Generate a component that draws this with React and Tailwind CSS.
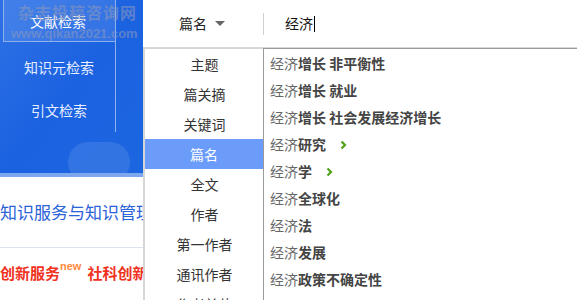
import React from "react";

const menuItems = ["主题", "篇关摘", "关键词", "篇名", "全文", "作者", "第一作者", "通讯作者", "作者单位"];

const suggestions = [
  { rest: "增长 非平衡性" },
  { rest: "增长 就业" },
  { rest: "增长 社会发展经济增长" },
  { rest: "研究", arrow: true },
  { rest: "学", arrow: true },
  { rest: "全球化" },
  { rest: "法" },
  { rest: "发展" },
  { rest: "政策不确定性" },
];

const Arrow = () => (
  <svg width="7" height="10" viewBox="0 0 7 10" className="ml-[14px]">
    <path d="M1.5 1.5 L5 5 L1.5 8.5" stroke="#52a21a" strokeWidth="2.2" fill="none" />
  </svg>
);

export default function App() {
  return (
    <div
      className="relative w-[577px] h-[300px] overflow-hidden bg-white flex"
      style={{ fontFamily: '"Noto Sans CJK SC", "Liberation Sans", sans-serif' }}
    >
      {/* 左侧导航 */}
      <div className="w-[143px] shrink-0 flex flex-col">
        <div className="relative h-[173px] bg-gradient-to-br from-[#2f72e6] via-[#1b62e1] to-[#1c66e0] overflow-hidden">
          <div className="absolute left-[3px] top-0 w-[113px] h-[42px] border border-t-0 border-[#8fb2ef] bg-white/10"></div>
          <div className="absolute left-[115px] top-[42px] w-px h-[90px] bg-[#8fb2ef]"></div>
          <div className="relative flex flex-col text-[14px] text-white">
            <div className="h-[42px] flex items-center pl-[30px]">文献检索</div>
            <div className="h-[50px] flex items-center pl-[24px] text-[#e8efff]">知识元检索</div>
            <div className="h-[36px] flex items-center pl-[31px] text-[#e8efff]">引文检索</div>
          </div>
          {/* 水印 */}
          <div className="absolute left-[18px] top-[4px] text-[16px] font-bold text-[#8796bf]/60 leading-none tracking-[1px]">杂志投稿咨询网</div>
          <div className="absolute left-[11px] top-[27px] text-[13px] font-bold text-[#8796bf]/60 leading-none" style={{ fontFamily: '"Liberation Sans", sans-serif' }}>www.qikan2021.com</div>
          <div className="absolute left-[68px] top-[142px] w-[62px] h-[40px] rounded-full bg-white/10"></div>
        </div>
        <div className="h-[4px] bg-[#7ea8ee]"></div>
        <div className="flex-1 flex flex-col overflow-hidden whitespace-nowrap">
          <div className="h-[70px] flex items-center text-[17px] text-[#2a62d8]">知识服务与知识管理</div>
          <div className="h-px bg-[#dde3ec]"></div>
          <div className="h-[50px] flex items-center text-[15px] font-bold text-[#f0321e]">
            <span>创新服务</span>
            <sup className="text-[11px] text-[#ff8a3d] font-bold -top-[7px]" style={{ fontFamily: '"Liberation Sans", sans-serif' }}>new</sup>
            <span className="ml-[6px]">社科创新</span>
          </div>
        </div>
      </div>

      {/* 右侧搜索区 */}
      <div className="flex-1 flex flex-col">
        <div className="h-[48px] flex items-center border-b border-[#d8d8d8]">
          <div className="w-[120px] flex items-center justify-center pr-[2px] text-[14px] text-[#222]">
            <span>篇名</span>
            <span className="ml-[8px] w-0 h-0 border-l-[5px] border-r-[5px] border-t-[5px] border-l-transparent border-r-transparent border-t-[#666]"></span>
          </div>
          <div className="w-px h-[22px] bg-[#d0d0d0]"></div>
          <div className="pl-[21px] text-[14px] text-[#111] flex items-center">
            经济<span className="w-px h-[16px] bg-black ml-px"></span>
          </div>
        </div>
        <div className="flex-1 bg-white"></div>
      </div>

      {/* 检索项下拉 */}
      <div className="absolute left-[143px] top-[48px] w-[121px] h-[260px] bg-white border-l-2 border-t border-[#d6d6d6] flex flex-col">
        {menuItems.map((m) => (
          <div
            key={m}
            className={`h-[30px] shrink-0 flex items-center justify-center text-[14px] ${
              m === "篇名" ? "bg-[#6b9cfa] text-white mr-px" : "text-[#333]"
            }`}
          >
            {m}
          </div>
        ))}
      </div>

      {/* 联想词列表 */}
      <div className="absolute left-[263px] top-[48px] right-0 h-[260px] bg-white border-l border-t border-[#9a9a9a] flex flex-col pt-px">
        {suggestions.map((s, i) => (
          <div key={i} className="h-[27px] shrink-0 flex items-center pl-[6px] text-[14px]">
            <span className="text-[#666]">经济</span>
            <span className="font-bold text-[#444]">{s.rest}</span>
            {s.arrow && <Arrow />}
          </div>
        ))}
      </div>
    </div>
  );
}
